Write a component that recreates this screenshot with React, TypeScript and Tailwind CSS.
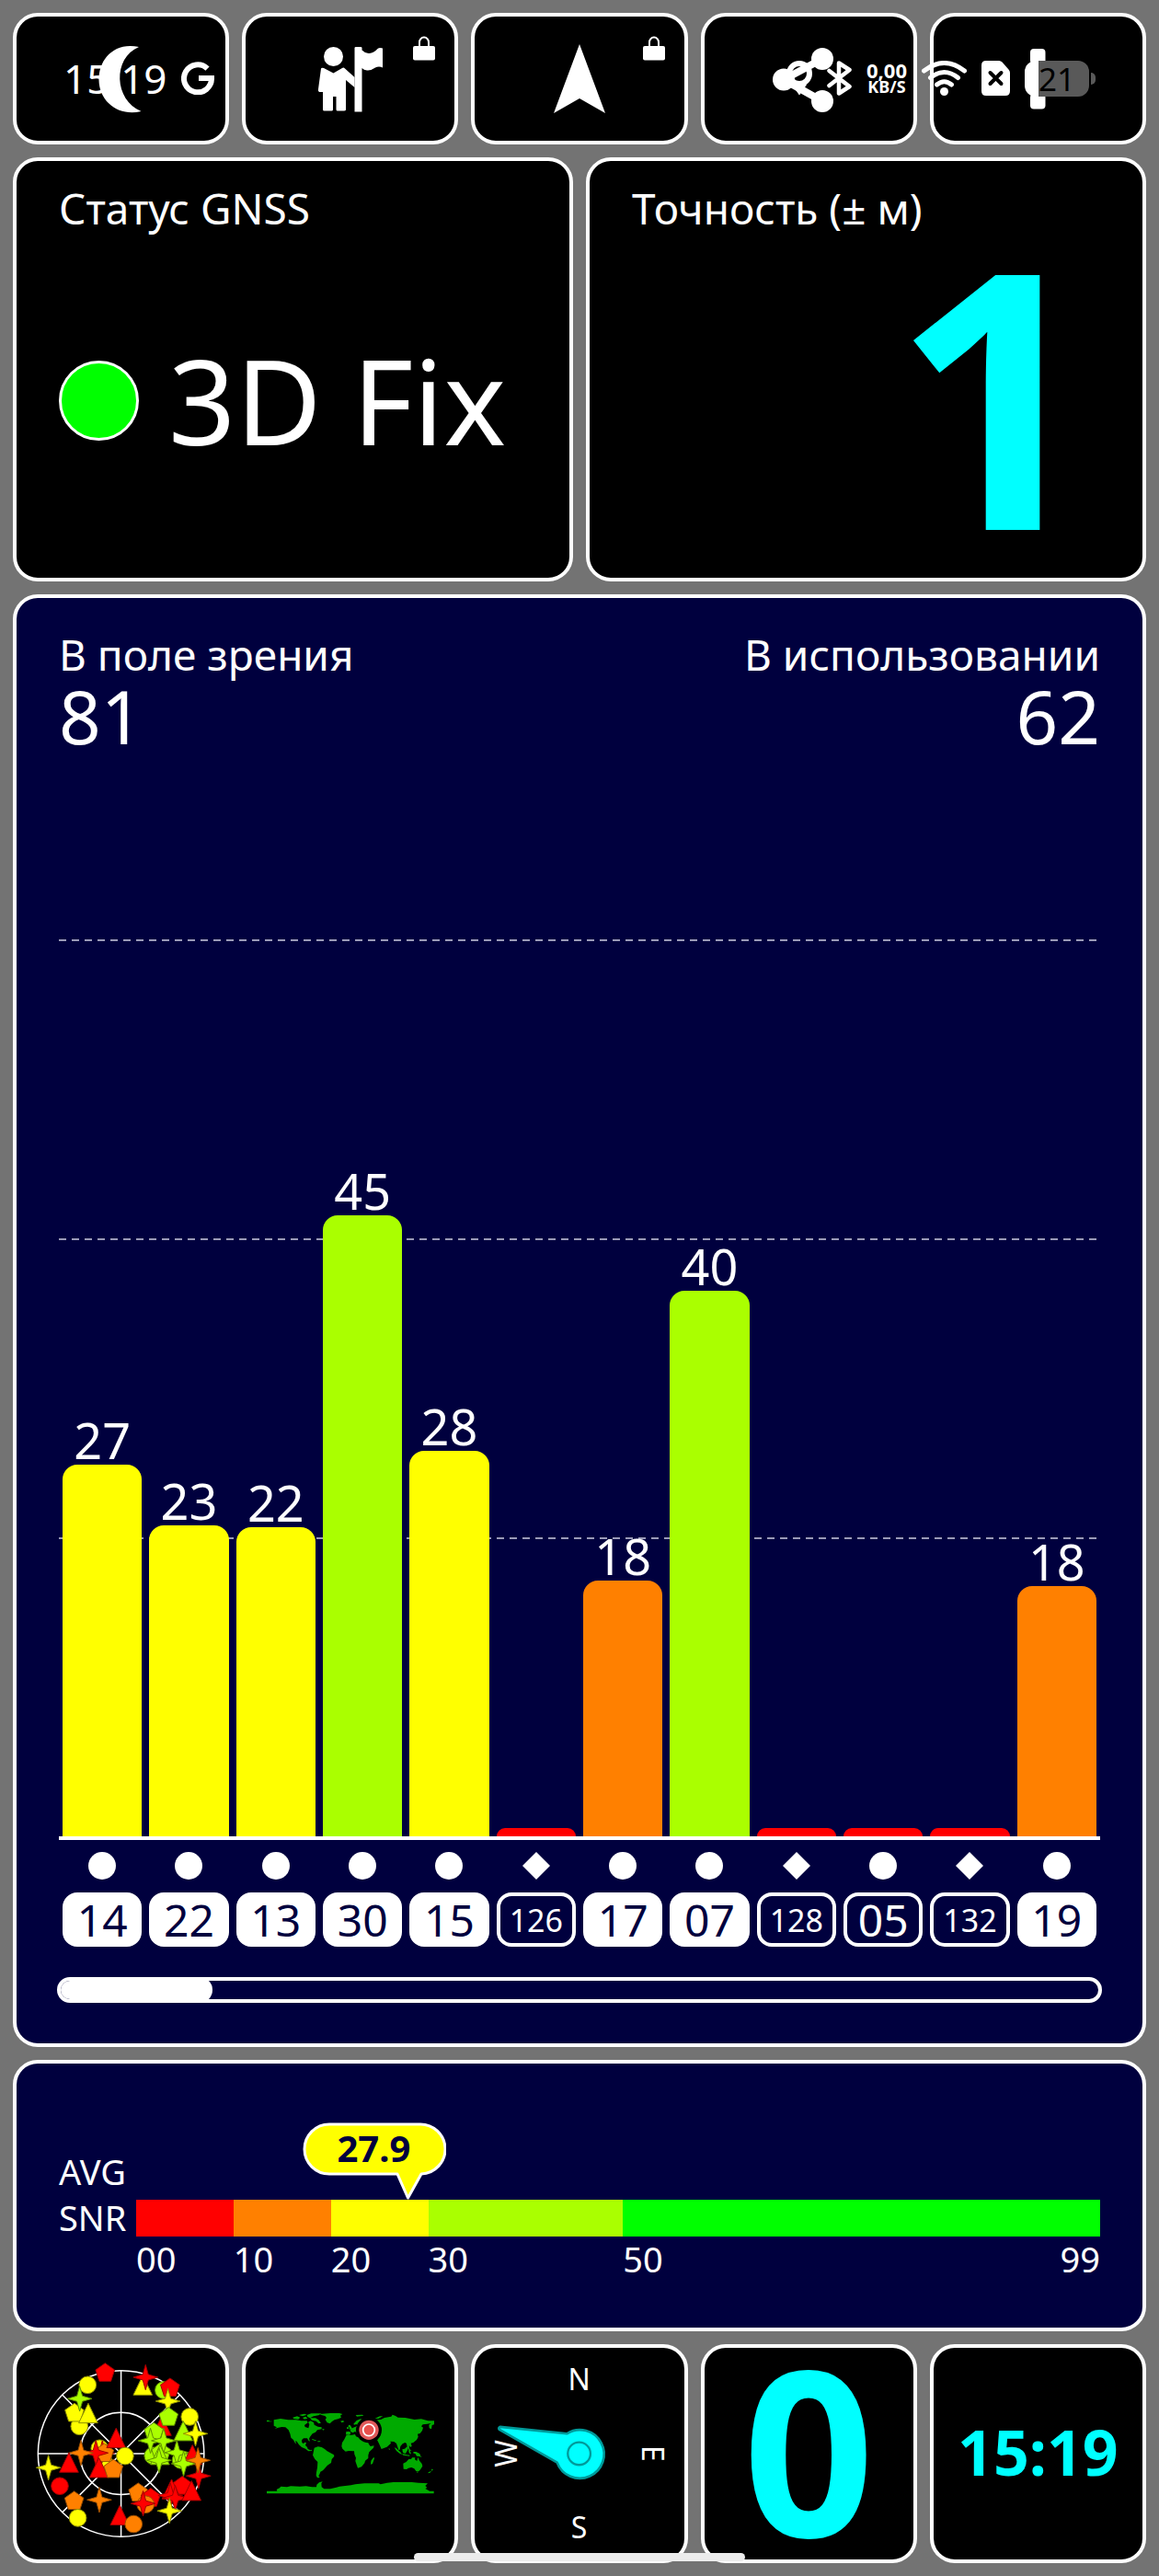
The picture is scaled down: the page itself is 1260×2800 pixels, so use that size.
import type { ReactNode } from "react";

type Satellite = { id: string; snr?: number; level: number; color: string; shape: "circle" | "diamond"; used: boolean };

const satellites: Satellite[] = [
  { id: "14", snr: 27, level: 41.4, color: "bg-[#ffff00]", shape: "circle", used: true },
  { id: "22", snr: 23, level: 34.7, color: "bg-[#ffff00]", shape: "circle", used: true },
  { id: "13", snr: 22, level: 34.5, color: "bg-[#ffff00]", shape: "circle", used: true },
  { id: "30", snr: 45, level: 69.2, color: "bg-[#aaff00]", shape: "circle", used: true },
  { id: "15", snr: 28, level: 43, color: "bg-[#ffff00]", shape: "circle", used: true },
  { id: "126", level: 0.9, color: "bg-[#ff0000]", shape: "diamond", used: false },
  { id: "17", snr: 18, level: 28.5, color: "bg-[#ff8000]", shape: "circle", used: true },
  { id: "07", snr: 40, level: 60.8, color: "bg-[#aaff00]", shape: "circle", used: true },
  { id: "128", level: 0.9, color: "bg-[#ff0000]", shape: "diamond", used: false },
  { id: "05", level: 0.9, color: "bg-[#ff0000]", shape: "circle", used: false },
  { id: "132", level: 0.9, color: "bg-[#ff0000]", shape: "diamond", used: false },
  { id: "19", snr: 18, level: 27.9, color: "bg-[#ff8000]", shape: "circle", used: true },
];

const scale = [
  { from: "00", span: 10, color: "bg-[#ff0000]" },
  { from: "10", span: 10, color: "bg-[#ff8000]" },
  { from: "20", span: 10, color: "bg-[#ffff00]" },
  { from: "30", span: 20, color: "bg-[#aaff00]" },
  { from: "50", span: 49, color: "bg-[#00ff00]" },
];

const average = 27.9;

const card = "rounded-[27px] border-4 border-white";

function Lock() {
  return (
    <svg viewBox="0 0 24 27" className="absolute right-[21px] top-[21px] w-6" aria-hidden="true">
      <path d="M7 12V7a5 5.500 0 0 1 10 0v5" fill="none" stroke="#fff" strokeWidth="2" />
      <rect x="0" y="11" width="24" height="15.500" rx="2" fill="#fff" />
    </svg>
  );
}

function ToolButton({ label, locked, viewBox, children }: { label: string; locked?: boolean; viewBox: string; children: ReactNode }) {
  return (
    <button type="button" aria-label={label} className={`${card} relative flex min-h-[143px] items-center justify-center bg-black`}>
      <svg viewBox={viewBox} className="w-[72px] overflow-visible" fill="#fff" aria-hidden="true">
        {children}
      </svg>
      {locked && <Lock />}
    </button>
  );
}

function Toolbar() {
  return (
    <nav className="grid grid-cols-5 gap-[14px]">
      <ToolButton label="Ночной режим" viewBox="96 49 72 72">
        <path d="M151 50C124 44 107 64 107.500 86c.500 24 22 40 46 34C124 108 122 62 151 50Z" />
      </ToolButton>
      <ToolButton label="Метка" locked viewBox="345 49 72 72">
        <ellipse cx="362.500" cy="60.500" rx="10.500" ry="10.500" />
        <path d="M349 73.500q.500-1 3-.500l10.500 5.500L372 73q1.500-1 3 .500l10.500 9.500v11L376 86v32.500q-.500 1-2 1h-7q-1.500 0-1.500-1.500v-14h-3.500v14q0 1.500-1.500 1.500h-8q-1.500 0-1.500-1.500V99h-4q-1.500-1-1-3Z" />
        <path d="M385.500 51q0-1 1.500-1h5q1.500 0 1.500 1v2.500q4 4 8 3.500 5-.500 9-5 2-1.500 5.500-.500v21q-4-2-8 0-5 3.500-9 3-3.500-.500-5.500-2.500v47.500h-8Z" />
      </ToolButton>
      <ToolButton label="Навигация" locked viewBox="594 49 72 72">
        <path d="m630 47 28 75-28-16-28 16Z" />
      </ToolButton>
      <ToolButton label="Поделиться" viewBox="843 49 72 72">
        <path d="M894 63 852 85.500l42 23.500" fill="none" stroke="#fff" strokeWidth="8" />
        <circle cx="894" cy="63" r="12" />
        <circle cx="852" cy="85.500" r="12" />
        <circle cx="894" cy="109" r="12" />
      </ToolButton>
      <ToolButton label="Меню" viewBox="1092 50 72 72">
        <rect x="1120" y="53" width="16.500" height="16.500" rx="4" />
        <rect x="1120" y="77.500" width="16.500" height="16.500" rx="4" />
        <rect x="1120" y="102" width="16.500" height="16.500" rx="4" />
      </ToolButton>
    </nav>
  );
}

function StatusBar() {
  return (
    <header className="pointer-events-none absolute inset-x-0 top-0 flex h-[170px] items-center justify-between px-[69px] text-white">
      <div className="flex items-center gap-4">
        <time className="text-[44px] leading-none">15:19</time>
        <svg viewBox="0 0 36 36" className="w-9" aria-label="Google">
          <path d="M28.500 7.600A15 15 0 1 0 33 18H19" fill="none" stroke="#fff" strokeWidth="6" />
        </svg>
      </div>
      <div className="flex items-center gap-4">
        <svg viewBox="0 0 28 38" className="w-7" aria-hidden="true">
          <circle cx="14" cy="14" r="11" fill="none" stroke="#fff" strokeWidth="6" />
          <path d="M6 26 14 37.500 22 26Z" fill="#fff" />
        </svg>
        <svg viewBox="0 0 27 38" className="w-[27px]" aria-hidden="true">
          <path d="m2.500 11 22 17L13 35.500v-33L24.500 10l-22 17" fill="none" stroke="#fff" strokeWidth="4.500" strokeLinecap="round" strokeLinejoin="round" />
        </svg>
        <div className="text-center font-bold">
          <div className="text-[22px] leading-[18px]">0,00</div>
          <div className="text-[18px] leading-[18px]">KB/S</div>
        </div>
        <svg viewBox="0 0 49 38" className="w-[49px]" fill="none" stroke="#fff" strokeWidth="5" strokeLinecap="round" aria-hidden="true">
          <path d="M2.500 11Q24.500-6 46.500 11M9.500 18.500q15-12 30 0M16.500 26q8-6.500 16 0" />
          <circle cx="24.500" cy="33.500" r="4.500" fill="#fff" stroke="none" />
        </svg>
        <svg viewBox="0 0 31 38" className="w-[31px]" aria-hidden="true">
          <path d="M5 0h14q2 0 3.500 1.500l7 8Q31 11 31 13v20q0 5-5 5H5q-5 0-5-5V5q0-5 5-5Z" fill="#fff" />
          <path d="m9.500 13 12 12m0-12-12 12" stroke="#000" strokeWidth="4" strokeLinecap="round" />
        </svg>
        <div className="flex items-center gap-[2px]">
          <div className="flex h-[39px] w-[70px] items-center justify-center rounded-[12px] bg-[linear-gradient(90deg,#fff_22%,#595959_22%)] text-[35px] leading-none text-black">
            21
          </div>
          <div className="h-[13px] w-[5px] rounded-r-full bg-[#595959]" />
        </div>
      </div>
    </header>
  );
}

function Chart() {
  return (
    <section className={`${card} flex flex-1 flex-col bg-[#00003e] px-[44px] pb-[44px] pt-[31px] text-white`}>
      <div className="flex justify-between px-[2px]">
        <div>
          <h2 className="text-[46px] leading-[60px]">В поле зрения</h2>
          <p className="text-[80px] leading-[74px]">81</p>
        </div>
        <div className="text-right">
          <h2 className="text-[46px] leading-[60px]">В использовании</h2>
          <p className="text-[80px] leading-[74px]">62</p>
        </div>
      </div>

      <div className="relative mx-[2px] mt-[206px] grid min-h-[600px] flex-1 grid-cols-12 border-b-4 border-white">
        <div className="absolute inset-0 flex flex-col" aria-hidden="true">
          {[0, 1, 2].map((line) => (
            <div key={line} className="flex-1">
              <div className="h-[2px] bg-[repeating-linear-gradient(90deg,#9a9ab8_0_8px,transparent_8px_14px)]" />
            </div>
          ))}
        </div>
        {satellites.map((s) => (
          <div key={s.id} className="relative flex flex-col items-stretch justify-end px-1 text-center">
            {s.snr && <span className="text-[54px] leading-[54px]">{s.snr}</span>}
            <div className={`shrink-0 rounded-t-[16px] ${s.color}`} style={{ height: `${s.level}%` }} />
          </div>
        ))}
      </div>

      <ul className="mx-[2px] mt-[13px] grid grid-cols-12">
        {satellites.map((s) => (
          <li key={s.id} className="flex flex-col items-stretch gap-[14px] px-1">
            <svg viewBox="0 0 30 30" className="mx-auto w-[30px]" fill="#fff" aria-hidden="true">
              {s.shape === "circle" ? <circle cx="15" cy="15" r="15" /> : <path d="m15 0 15 15-15 15L0 15Z" />}
            </svg>
            <span
              className={`flex h-[59px] items-center justify-center rounded-[16px] border-4 border-white leading-none ${
                s.used ? "bg-white text-[#00003e]" : "text-white"
              } ${s.id.length > 2 ? "text-[34px]" : "text-[48px]"}`}
            >
              {s.id}
            </span>
          </li>
        ))}
      </ul>

      <div className="mt-[33px] h-7 overflow-hidden rounded-full border-4 border-white">
        <div className="-my-1 -ml-1 h-7 w-[15%] rounded-full bg-white" />
      </div>
    </section>
  );
}

function AverageSnr() {
  return (
    <section className={`${card} flex bg-[#00003e] px-[46px] pb-[51px] pt-[92px] text-[38px] leading-[50px] text-white`}>
      <div className="w-[84px]">
        AVG
        <br />
        SNR
      </div>
      <div className="relative flex-1 pt-14">
        <div className="absolute top-[-28px]" style={{ left: `${(average / 99) * 100}%` }}>
          <svg viewBox="0 0 156 86" className="-ml-[114px] w-[156px]" aria-hidden="true">
            <path d="M29 2h98a27 27 0 0 1 2 54L114.500 82 103 56H29A27 27 0 0 1 29 2Z" fill="#ffff00" stroke="#fff" strokeWidth="3" strokeLinejoin="round" />
          </svg>
          <span className="absolute inset-x-0 top-[3px] -ml-[115px] w-[156px] text-center text-[40px] font-bold text-[#00003e]">27.9</span>
        </div>
        <div className="flex h-10">
          {scale.map((s) => (
            <div key={s.from} className={s.color} style={{ flex: `${s.span} 0 0` }} />
          ))}
        </div>
        <div className="flex leading-[48px]">
          {scale.map((s) => (
            <div key={s.from} className="flex min-w-0 justify-between" style={{ flex: `${s.span} 0 0` }}>
              <span>{s.from}</span>
              {s.from === "50" && <span>99</span>}
            </div>
          ))}
        </div>
      </div>
    </section>
  );
}

type Kind = "c" | "p" | "t" | "s";
type Tone = "r" | "o" | "y" | "g";

const tones: Record<Tone, [string, string]> = {
  r: ["#ff0000", "#a00000"],
  o: ["#ff8000", "#a05000"],
  y: ["#ffff00", "#909000"],
  g: ["#aaff00", "#609000"],
};

const marks: [Kind, Tone, number, number][] = [
  ["p", "r", 343, 148], ["c", "y", 286, 187], ["c", "y", 259, 322], ["p", "y", 243, 279], ["t", "y", 288, 284], ["s", "g", 260, 232],
  ["t", "y", 466, 193], ["s", "r", 475, 162], ["c", "g", 534, 204], ["p", "r", 555, 197], ["t", "r", 528, 325], ["s", "y", 548, 240],
  ["c", "y", 619, 291], ["p", "g", 550, 292], ["t", "g", 598, 342], ["s", "y", 638, 346],
  ["p", "g", 502, 342], ["c", "g", 499, 418], ["p", "g", 526, 408], ["s", "g", 491, 369], ["s", "g", 534, 369], ["t", "g", 522, 420], ["s", "g", 519, 433],
  ["c", "g", 590, 432], ["s", "g", 577, 408], ["t", "r", 628, 420], ["s", "g", 599, 444], ["s", "r", 648, 484], ["s", "o", 646, 433],
  ["c", "y", 325, 394], ["s", "r", 334, 410], ["t", "y", 352, 440], ["p", "o", 340, 410], ["s", "r", 313, 409], ["t", "r", 379, 365],
  ["t", "r", 323, 462], ["p", "o", 370, 462], ["c", "y", 408, 419], ["s", "o", 264, 409], ["t", "r", 225, 445],
  ["s", "y", 158, 457], ["c", "r", 195, 517], ["p", "o", 242, 566], ["c", "y", 254, 621], ["s", "o", 324, 562],
  ["p", "o", 451, 539], ["p", "r", 492, 556], ["c", "o", 475, 577], ["s", "r", 467, 574], ["t", "r", 391, 617], ["c", "o", 436, 641],
  ["p", "r", 595, 517], ["t", "r", 560, 532], ["s", "r", 556, 548], ["s", "r", 572, 556], ["t", "r", 625, 537], ["s", "y", 553, 598],
];

const shapes: Record<Kind, ReactNode> = {
  c: <circle r="28" />,
  p: <path d="M0-32 31-10 19 27h-38l-12-37Z" />,
  t: <path d="M0-37 31 27h-62Z" />,
  s: <path d="M0-41 9-9 40 0 9 9 0 41-9 9-40 0-9-9Z" />,
};

function SkyPlot() {
  return (
    <svg viewBox="42 54 706 714" className="w-full" role="img" aria-label="Карта неба">
      <g fill="none" stroke="#fff" strokeWidth="4.500">
        <circle cx="395" cy="411" r="271" />
        <circle cx="395" cy="411" r="134" />
        <path d="M124 411h542M395 140v542M203 219l384 384M587 219 203 603" />
      </g>
      {marks.map(([kind, tone, x, y], i) => (
        <g key={i} transform={`translate(${x} ${y})`} fill={tones[tone][0]} stroke={tones[tone][1]} strokeWidth="3">
          {shapes[kind]}
        </g>
      ))}
    </svg>
  );
}

function WorldMap() {
  return (
    <svg viewBox="15 14 546 262" className="w-[182px]" role="img" aria-label="Карта мира">
      <g fill="#00aa00">
        <path d="M15 37h8v3h8v2H15ZM38 36l22-4 25 4h25l18 3h18l3 6-11 8 2 6 11 4 3-12-4-8 8-4 10 5 2 8 12 6 12 2v6l-14 3-6 7-10 5-8 10-3 6 3 9-5-3-4-7h-12l-6 6 1 8 4 3 6-4 4 1-3 9 6 6 2 6 8 4 6-2-2 4-10 1-10-8-12-5-9-8-7-11-5-1 4 10-6-6-4-8-8-7-3-13-5-12-10-9-12-1-11 2-12 4 7-5-10-5Z" />
        <path d="M100 28l14-4 10 4-6 6-16-2ZM120 20l18-4 8 3-14 5ZM132 29l10-4 6 6-10 3ZM146 20l14-5h34l-10 6-16 3-12 6-8-4ZM156 30l18 0 10 6 8 10-8 2-8-8-14-3ZM164 98l14 5-4 2-12-5ZM181 105h10l-3 3h-7ZM196 64l8 3-6 3Z" />
        <path d="m188 17 34-3h30l10 3-7 5 3 6-10 5-12 3-8 5-7 7-9-3-6-10 4-6-5-6-12-3ZM255 40l9-2 4 4-8 3Z" />
        <path d="m170 127 12-4 12 2 10 6 8 7 22 12 1 5-8 9-2 12-12 8-8 9-7 8-8 4-2 6-4 8 4 5-8 1-4-8 1-10 3-16 1-18-9-9-7-13 2-9Z" />
        <path d="M275 85h18l10-2 3 7 12 4 8-4 14 5 8 20 5 7 12-2-2 7-14 14-3 10v10l-10 8-2 8-10 12-12 4-4-11-4-12 2-10-5-12-1-10-18-1-10 2-10-9-3-8 2-12 6-9ZM364 157l2 5-6 17-6 2 1-12Z" />
        <path d="m274 74 12 0 3 6-5 5-11-1ZM283 52l5 2 6 10-10 3 1-6-5-4ZM276 60h6v5h-6ZM287 68l10-7 8-3 8-6 30-2v34l-14-1-6 4-8-9-2 4-10-8-7 4-7-3ZM298 49l10-11 12-5 12 2-6 8-8 4-6 8-5-5-7 2Z" />
        <path d="m305 20 22-1 4 3-22 3ZM368 31l16-7 10 0-15 8ZM325 40l20 2 20-5 22-2 12-6 22-4 4-6 10 4 8 5 24 1 30 6 22-2 22 6h20l19 6-5 5-12 0-9 3-2 13-7-3-1-11 7-5-13 2-14 2-5 6 6 4-3 10-7 9-8 2 2 9-5 10-11 9-8 2 3 9-4 4-5-6 1 9 4 9-5-2-6-12-1-9-6-4-8 4-7 8-2 11-4 1-7-21-8-6-12-1 2 6-13 12-18 7-8-18-6-12Z" />
        <path d="m488 82 4-2 2-7-2-10 4-1 1 9 6 2-5 4-2 7-8 4ZM470 108h4l3 12 3 8-6-6ZM431 126l6 2 16 15 3 6-8-4-10-8ZM456 146l16 4 10 1-2 3-20-3ZM457 132l8-2 8-7 4 4-4 10-6 9-8-3ZM478 133l10 1-6 3 4 10h-4l-4-7ZM494 140l8 0 12 6 3 8 4 4-9-3-8-1-4-7-8-3ZM413 127l4 5-3 2Z" />
        <path d="m460 178 10-5 8-9 8 0 3-5h10l-1 6 7 5 3-13 5 12 8 10 2 8-8 12-5 5-8-1-6-8-9-4-10 2-6 4-10-1ZM503 205l6 0-2 4ZM552 196l6 1-5 6ZM542 207l10-5-4 6-7 2Z" />
        <path d="M15 276v-8h34l-2-5 10-5 4-5 20 2 12-3 30 1 20-1 20 3 14 0 1-8 8-7 11-3-4 6 1 12 8 6 20 0 20-5 10-3 38-4 14-3 30-3h46l6 3 22-5 20-2h60l22 2 30 2-8 8 6 6-6 3 14 8h14v8Z" />
      </g>
      <circle cx="348" cy="69" r="42" />
      <circle cx="348" cy="69" r="32" fill="#e05a5a" />
      <circle cx="348" cy="69" r="19" fill="#e8504c" stroke="#fff" strokeWidth="5" />
    </svg>
  );
}

function Compass() {
  return (
    <svg viewBox="757 54 706 714" className="w-full" role="img" aria-label="Компас">
      <path d="M1070 346 852 324q-7 4-2 9l188 107A79 79 0 1 0 1070 346Z" fill="#00ffff" stroke="#009a9a" strokeWidth="8" strokeLinejoin="round" />
      <circle cx="1110" cy="411" r="37" fill="none" stroke="#009a9a" strokeWidth="7" />
      <g fill="#fff" fontSize="96" textAnchor="middle">
        <text x="1110" y="204">N</text>
        <text x="1110" y="686">S</text>
        <text transform="translate(1314 411) rotate(90)">E</text>
        <text transform="translate(906 411) rotate(-90)">W</text>
      </g>
    </svg>
  );
}

const tile = `${card} flex min-h-[238px] items-center justify-center bg-black`;

export default function App() {
  return (
    <main className="relative flex min-h-screen flex-col gap-[14px] bg-[#737373] p-[14px] font-['Noto_Sans',sans-serif]">
      <Toolbar />

      <div className="grid grid-cols-2 gap-[14px] text-white">
        <section className={`${card} flex min-h-[461px] flex-col bg-black px-[46px] pt-[21px]`}>
          <h2 className="text-[46px] leading-[60px]">Статус GNSS</h2>
          <div className="flex flex-1 items-center gap-8 pb-[14px]">
            <span className="size-[87px] shrink-0 rounded-full border-[3px] border-white bg-[#00ff00]" />
            <span className="whitespace-nowrap text-[128px] leading-none">3D Fix</span>
          </div>
        </section>
        <section className={`${card} flex min-h-[461px] flex-col bg-black px-[46px] pt-[21px]`}>
          <h2 className="text-[46px] leading-[60px]">Точность (± м)</h2>
          <p className="flex flex-1 items-center justify-end pb-8 pr-1 text-[388px] font-bold leading-[340px] text-[#00ffff]">1</p>
        </section>
      </div>

      <Chart />
      <AverageSnr />

      <div className="grid grid-cols-5 gap-[14px]">
        <section className={`${card} relative min-h-[238px] bg-black`}>
          <div className="absolute -inset-1 flex items-center">
            <SkyPlot />
          </div>
        </section>
        <section className={tile}>
          <WorldMap />
        </section>
        <section className={`${card} relative min-h-[238px] bg-black`}>
          <div className="absolute -inset-1 flex items-center">
            <Compass />
          </div>
        </section>
        <section className={tile}>
          <span className="pb-3 text-[250px] font-bold leading-[218px] text-[#00ffff]">0</span>
        </section>
        <section className={tile}>
          <time className="pb-1 text-[68px] font-bold leading-none text-[#00ffff]">15:19</time>
        </section>
      </div>

      <StatusBar />
      <div className="absolute bottom-4 left-1/2 h-[9px] w-[360px] -translate-x-1/2 rounded-full bg-[#ececec]" />
    </main>
  );
}
